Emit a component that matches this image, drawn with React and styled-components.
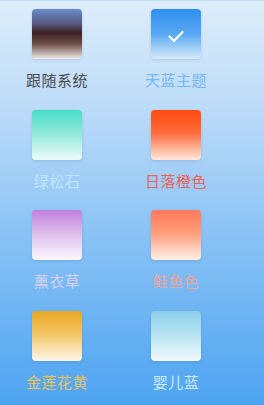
import React from "react";
import styled, { createGlobalStyle } from "styled-components";

const GlobalStyle = createGlobalStyle`
  html, body {
    margin: 0;
    padding: 0;
  }
  body {
    font-family: "Noto Sans CJK SC", "Liberation Sans", sans-serif;
  }
`;

const Page = styled.div`
  width: 264px;
  height: 405px;
  overflow: hidden;
  box-sizing: border-box;
  border-top: 1px solid #c4dff6;
  background: linear-gradient(180deg, #deedfb 0%, #b7d9f8 30%, #86c1f5 60%, #4ea4f1 100%);
`;

const ThemeGrid = styled.div`
  display: grid;
  grid-template-columns: repeat(3, 114px);
  grid-auto-rows: 100.67px;
  column-gap: 5px;
  padding-top: 8px;
`;

const ThemeItem = styled.div`
  display: flex;
  flex-direction: column;
  align-items: center;
`;

const Swatch = styled.div`
  width: 50px;
  height: 50px;
  border-radius: 4px;
  background: ${(p) => p.$bg};
  box-shadow: 0 1px 3px rgba(40, 80, 130, 0.18);
  display: flex;
  align-items: center;
  justify-content: center;
`;

const Label = styled.div`
  margin-top: 11px;
  font-size: 15px;
  line-height: 20px;
  letter-spacing: 0.5px;
  color: ${(p) => p.$color};
  white-space: nowrap;
`;

const themes = [
  {
    name: "跟随系统",
    color: "#4a4a50",
    bg: "linear-gradient(180deg, #6b8ccc 0%, #55587a 30%, #3c1f20 48%, #6e5048 70%, #f2ece8 100%)",
  },
  {
    name: "天蓝主题",
    color: "#74b6ee",
    bg: "linear-gradient(180deg, #2f8ff0 0%, #58a8f2 50%, #d8ebfb 100%)",
    checked: true,
  },
  { name: "墨黑", color: "#9cc6ee", bg: "linear-gradient(180deg, #333 0%, #ddd 100%)" },
  {
    name: "绿松石",
    color: "#c2e6f8",
    bg: "linear-gradient(180deg, #48dcc8 0%, #96eadc 50%, #eefbfa 100%)",
  },
  {
    name: "日落橙色",
    color: "#ea6158",
    bg: "linear-gradient(180deg, #ff4a10 0%, #ff6a3a 45%, #ffe8dc 100%)",
  },
  { name: "", color: "transparent", bg: "transparent" },
  {
    name: "薰衣草",
    color: "#dcd0ee",
    bg: "linear-gradient(180deg, #c27ee0 0%, #dcbcea 45%, #fbf7fd 100%)",
  },
  {
    name: "鲑鱼色",
    color: "#f0a49a",
    bg: "linear-gradient(180deg, #ff7a5c 0%, #ff9c78 45%, #fff0e8 100%)",
  },
  { name: "", color: "transparent", bg: "transparent" },
  {
    name: "金莲花黄",
    color: "#eec45a",
    bg: "linear-gradient(180deg, #e9a722 0%, #f2c462 45%, #fff7ea 100%)",
  },
  {
    name: "婴儿蓝",
    color: "#cfeaf8",
    bg: "linear-gradient(180deg, #8ccfea 0%, #b4e2f0 45%, #f2fbfd 100%)",
  },
];

const Check = () => (
  <svg width="20" height="20" viewBox="0 0 20 20" style={{ marginTop: 3 }}>
    <path d="M3.5 10.5 L8 15 L16.5 6" fill="none" stroke="#fff" strokeWidth="2.2" strokeLinecap="round" strokeLinejoin="round" />
  </svg>
);

const App = () => (
  <>
    <GlobalStyle />
    <Page>
      <ThemeGrid>
        {themes.map((t, idx) =>
          t.bg === "transparent" ? (
            <ThemeItem key={idx} />
          ) : (
            <ThemeItem key={idx}>
              <Swatch $bg={t.bg}>{t.checked && <Check />}</Swatch>
              <Label $color={t.color}>{t.name}</Label>
            </ThemeItem>
          )
        )}
      </ThemeGrid>
    </Page>
  </>
);

export default App;
